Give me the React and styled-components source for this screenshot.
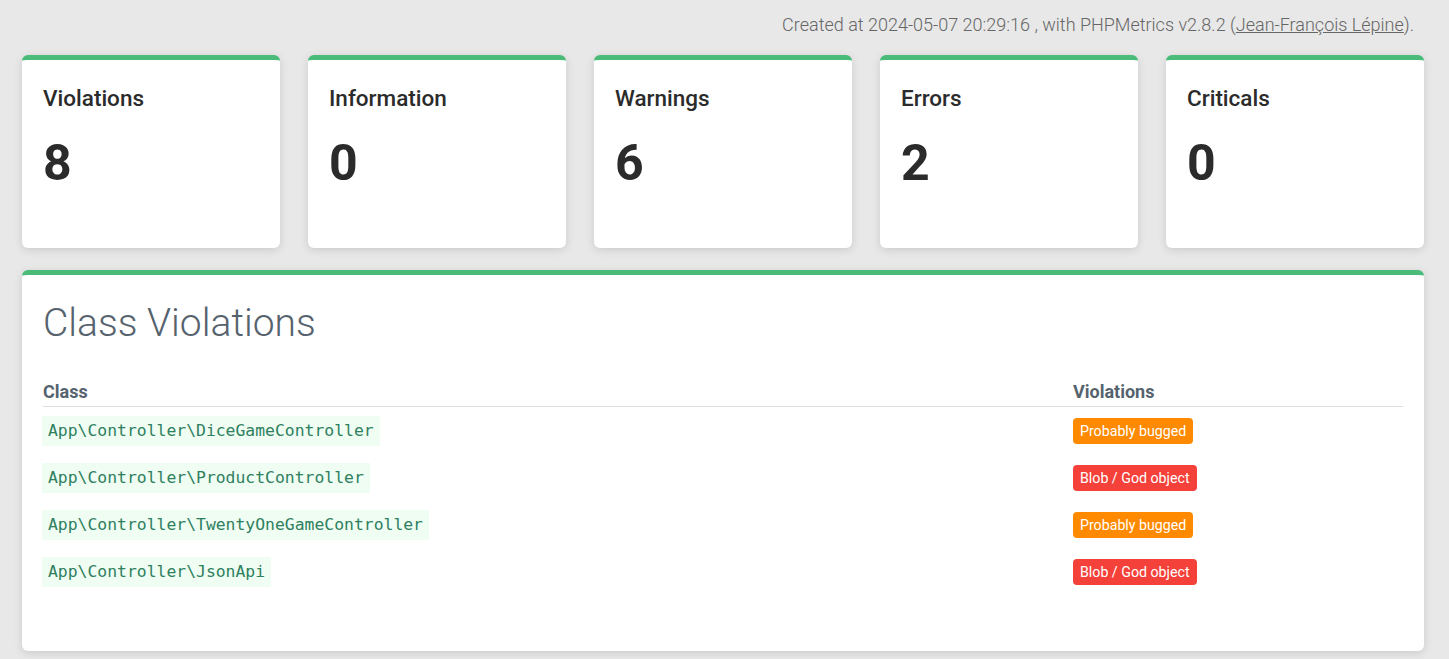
import React from 'react';
import styled, { createGlobalStyle } from 'styled-components';

const GlobalStyle = createGlobalStyle`
    html, body {
        margin: 0;
        padding: 0;
        background: #e8e8e8;
        font-family: Roboto, "Liberation Sans", sans-serif;
    }
`;

const Page = styled.div`
    padding: 0 25px 8px 22px;
`;

const Credits = styled.header`
    display: flex;
    justify-content: flex-end;
    padding: 13px 10px 0 0;
    height: 55px;
    box-sizing: border-box;
    font-size: 18px;
    font-weight: 300;
    color: #666;
    line-height: 24px;

    a {
        color: #666;
        text-decoration: underline;
    }
`;

const CardRow = styled.div`
    display: grid;
    grid-template-columns: repeat(5, 1fr);
    gap: 28px;
`;

const Card = styled.div`
    background: #fff;
    border-top: 5px solid #4bbb79;
    border-radius: 6px;
    box-shadow: 0 2px 9px rgba(0, 0, 0, 0.13);
    padding: 25px 21px 55px;
`;

const CardTitle = styled.h3`
    margin: 0;
    font-size: 22.5px;
    font-weight: 500;
    line-height: 26px;
    color: #2b2b2b;
`;

const CardValue = styled.div`
    margin-top: 22px;
    font-size: 50px;
    font-weight: 700;
    line-height: 60px;
    color: #2b2b2b;
`;

const Panel = styled.section`
    margin-top: 22px;
    background: #fff;
    border-top: 5px solid #4bbb79;
    border-radius: 6px;
    box-shadow: 0 2px 9px rgba(0, 0, 0, 0.13);
    padding: 23px 21px 56px;
`;

const PanelTitle = styled.h2`
    margin: 0 0 31px;
    font-size: 39px;
    font-weight: 300;
    line-height: 50px;
    color: #56636e;
`;

const Table = styled.table`
    width: 100%;
    border-collapse: collapse;
`;

const Th = styled.th`
    text-align: left;
    font-size: 18px;
    font-weight: 700;
    line-height: 25px;
    color: #56636e;
    padding: 0 0 2px;
    border-bottom: 1px solid #dedede;
    width: ${p => p.$width || 'auto'};
`;

const Td = styled.td`
    padding: 0;
    height: 47px;
    vertical-align: middle;
`;

const Code = styled.code`
    display: inline-block;
    background: #effdf2;
    color: #2e8060;
    font-family: "DejaVu Sans Mono", "Liberation Mono", monospace;
    font-size: 16.4px;
    line-height: 30px;
    padding: 0 6px;
    margin-left: -1px;
`;

const Badge = styled.span`
    display: inline-block;
    background: ${p => (p.$kind === 'error' ? '#f4413a' : '#ff8a00')};
    color: #fff;
    font-size: 14.2px;
    line-height: 26px;
    padding: 0 7px;
    border-radius: 4px;
`;

const stats = [
    { label: 'Violations', value: 8 },
    { label: 'Information', value: 0 },
    { label: 'Warnings', value: 6 },
    { label: 'Errors', value: 2 },
    { label: 'Criticals', value: 0 },
];

const rows = [
    { name: 'App\\Controller\\DiceGameController', violation: 'Probably bugged', kind: 'warning' },
    { name: 'App\\Controller\\ProductController', violation: 'Blob / God object', kind: 'error' },
    { name: 'App\\Controller\\TwentyOneGameController', violation: 'Probably bugged', kind: 'warning' },
    { name: 'App\\Controller\\JsonApi', violation: 'Blob / God object', kind: 'error' },
];

const App = () => (
    <Page>
        <GlobalStyle />
        <Credits>
            <span>
                Created at 2024-05-07 20:29:16 , with PHPMetrics v2.8.2 (<a href="#">Jean-François Lépine</a>).
            </span>
        </Credits>

        <CardRow>
            {stats.map(s => (
                <Card key={s.label}>
                    <CardTitle>{s.label}</CardTitle>
                    <CardValue>{s.value}</CardValue>
                </Card>
            ))}
        </CardRow>

        <Panel>
            <PanelTitle>Class Violations</PanelTitle>
            <Table>
                <thead>
                    <tr>
                        <Th $width="1030px">Class</Th>
                        <Th>Violations</Th>
                    </tr>
                </thead>
                <tbody>
                    {rows.map(r => (
                        <tr key={r.name}>
                            <Td><Code>{r.name}</Code></Td>
                            <Td><Badge $kind={r.kind}>{r.violation}</Badge></Td>
                        </tr>
                    ))}
                </tbody>
            </Table>
        </Panel>
    </Page>
);

export default App;
